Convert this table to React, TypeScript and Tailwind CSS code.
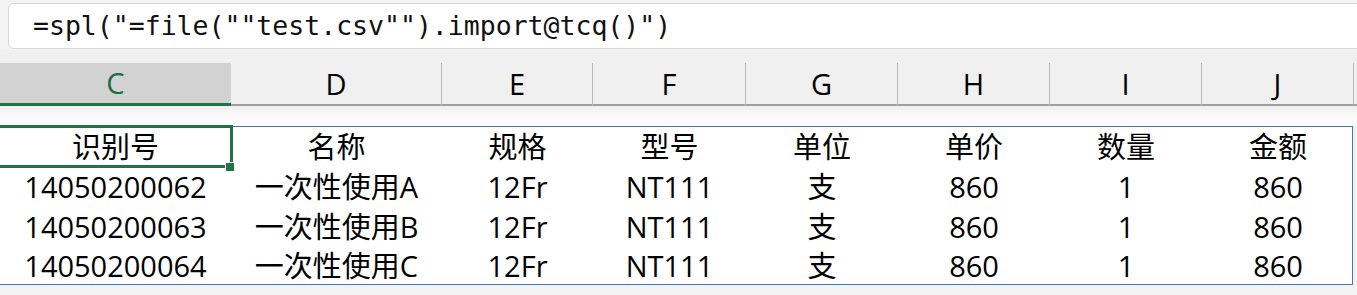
import React from 'react';

const columns = [
  { key: 'C', width: 'w-[231px]' },
  { key: 'D', width: 'w-[211px]' },
  { key: 'E', width: 'w-[151px]' },
  { key: 'F', width: 'w-[153px]' },
  { key: 'G', width: 'w-[152px]' },
  { key: 'H', width: 'w-[152px]' },
  { key: 'I', width: 'w-[152px]' },
  { key: 'J', width: 'w-[152px]' },
];

const rows = [
  ['识别号', '名称', '规格', '型号', '单位', '单价', '数量', '金额'],
  ['14050200062', '一次性使用A', '12Fr', 'NT111', '支', '860', '1', '860'],
  ['14050200063', '一次性使用B', '12Fr', 'NT111', '支', '860', '1', '860'],
  ['14050200064', '一次性使用C', '12Fr', 'NT111', '支', '860', '1', '860'],
];

export default function App() {
  return (
    <div className="w-[1357px] h-[295px] overflow-hidden bg-[#f3f3f3] font-['Open_Sans','Noto_Sans_CJK_SC',sans-serif] text-black">
      {/* formula bar */}
      <div className="h-[50px] pt-[3px] pl-[8px]">
        <div className="h-[46px] w-[1400px] bg-white border border-[#d6d6d6] rounded-[6px] flex items-center pl-[24px]">
          <span className="font-['DejaVu_Sans_Mono',monospace] text-[26.5px] leading-none text-[#111]">
            =spl("=file(""test.csv"").import@tcq()")
          </span>
        </div>
      </div>

      {/* column headers */}
      <div className="bg-[#f0f0f0] pt-[13px]">
        <div className="flex h-[43px]">
          {columns.map((c) =>
            c.key === 'C' ? (
              <div
                key={c.key}
                className={`${c.width} shrink-0 flex items-center justify-center bg-[#d2d2d2] border-b-[3px] border-[#217346] text-[29px] text-[#1d6b41]`}
              >
                {c.key}
              </div>
            ) : (
              <div
                key={c.key}
                className={`${c.width} shrink-0 flex items-center justify-center border-r border-[#b8b8b8] border-b-2 border-b-[#a0a0a0] text-[29px]`}
              >
                {c.key}
              </div>
            )
          )}
          <div className="flex-1 border-b-2 border-b-[#a0a0a0]" />
        </div>
      </div>

      {/* gap below headers */}
      <div className="h-[20px] bg-gradient-to-b from-[#efefef] via-[#fafafa] to-[#fdfdfd]" />

      {/* table */}
      <div className="relative w-[1353px] bg-white border border-[#4472c4] border-l-0">
        {rows.map((r, i) => {
          const last = i === rows.length - 1;
          return (
            <div key={i} className={last ? 'flex h-[37px] leading-[35px] pt-[1px]' : 'flex h-[40px] leading-[40px]'}>
              {r.map((cell, j) => (
                <div key={j} className={`${columns[j].width} shrink-0 text-center text-[29px] whitespace-nowrap`}>
                  {cell}
                </div>
              ))}
            </div>
          );
        })}
        {/* active cell selection */}
        <div className="absolute left-[-3px] top-[-2px] w-[236px] h-[43px] border-[3px] border-[#217346]" />
        <div className="absolute left-[226px] top-[36px] w-[8px] h-[8px] bg-[#217346] outline outline-1 outline-white" />
      </div>
    </div>
  );
}
